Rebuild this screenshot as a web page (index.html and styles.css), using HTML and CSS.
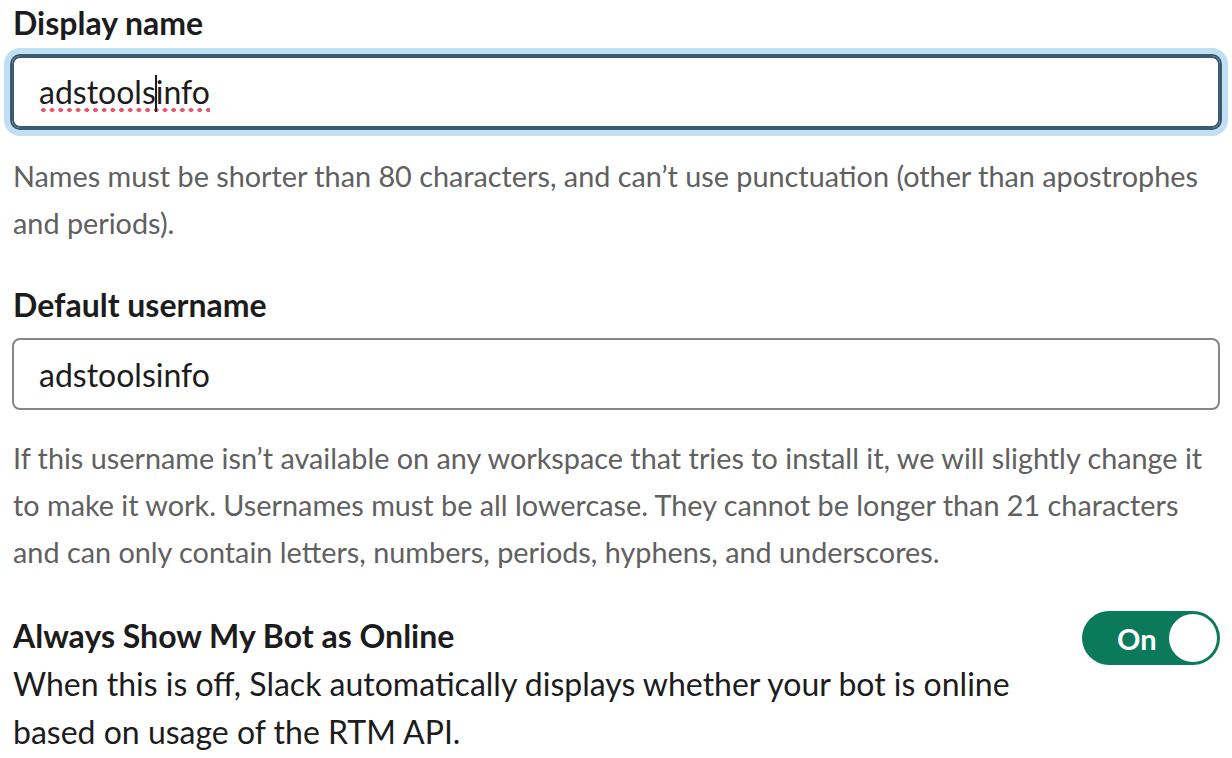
FILE: index.html
```html
<!DOCTYPE html>
<html>
<head>
<meta charset="utf-8">
<link rel="stylesheet" href="styles.css">
</head>
<body>
<div class="page">
  <section class="field">
    <div class="label">Display name</div>
    <div class="input input-focused"><span class="spell">adstools<span class="caret"></span>info</span></div>
    <p class="hint">Names must be shorter than 80 characters, and can’t use punctuation (other than apostrophes and periods).</p>
  </section>
  <section class="field field-second">
    <div class="label">Default username</div>
    <div class="input">adstoolsinfo</div>
    <p class="hint">If this username isn’t available on any workspace that tries to install it, we will slightly change it to make it work. Usernames must be all lowercase. They cannot be longer than 21 characters and can only contain letters, numbers, periods, hyphens, and underscores.</p>
  </section>
  <section class="toggle-row">
    <div class="toggle-text">
      <div class="toggle-title">Always Show My Bot as Online</div>
      <p class="toggle-desc">When this is off, Slack automatically displays whether your bot is online based on usage of the RTM API.</p>
    </div>
    <div class="toggle"><span class="toggle-label">On</span><span class="knob"></span></div>
  </section>
</div>
</body>
</html>
```
FILE: styles.css
```css
html, body {
  margin: 0;
  padding: 0;
  background: #ffffff;
}
body {
  font-family: Lato, "Open Sans", sans-serif;
  color: #1d1c1d;
}
.page {
  width: 1208px;
  padding: 5px 0 0 12px;
}
.label {
  font-size: 32px;
  font-weight: 700;
  line-height: 36px;
  padding-left: 1px;
  margin-bottom: 15px;
}
.input {
  box-sizing: border-box;
  height: 72px;
  border: 2px solid #868686;
  border-radius: 8px;
  padding: 0 0 0 25px;
  font-size: 32px;
  display: flex;
  align-items: center;
  color: #1d1c1d;
}
.input-focused {
  border-color: #3d5a73;
  box-shadow: 0 0 0 2px #3d5a73, 0 0 0 8px #bfe0f2;
}
.spell {
  background-image: radial-gradient(circle, #e8576e 2px, transparent 2.4px);
  background-size: 8.7px 6px;
  background-repeat: repeat-x;
  background-position: 0 100%;
  line-height: 40px;
  padding-bottom: 1px;
}
.caret {
  display: inline-block;
  width: 2px;
  height: 37px;
  background: #1d1c1d;
  vertical-align: -8px;
  margin: 0 -1px;
}
.hint {
  margin: 25px 0 0 1px;
  font-size: 28.8px;
  line-height: 47px;
  color: #616061;
}
.field-second {
  margin-top: 40px;
}
.toggle-row {
  display: flex;
  justify-content: space-between;
  align-items: flex-start;
  margin-top: 36px;
}
.toggle-text {
  padding-left: 1px;
  width: 1010px;
}
.toggle-title {
  font-size: 32px;
  font-weight: 700;
  line-height: 48px;
}
.toggle-desc {
  margin: 0;
  font-size: 32px;
  line-height: 48px;
  width: 1010px;
}
.toggle {
  box-sizing: border-box;
  width: 138px;
  height: 54px;
  margin-top: -1px;
  border-radius: 27px;
  background: #0b7a5a;
  display: flex;
  align-items: center;
  justify-content: space-between;
  padding: 0 3px 0 35px;
}
.toggle-label {
  color: #ffffff;
  font-size: 29px;
  font-weight: 700;
}
.knob {
  width: 48px;
  height: 48px;
  border-radius: 50%;
  background: #ffffff;
}
```
